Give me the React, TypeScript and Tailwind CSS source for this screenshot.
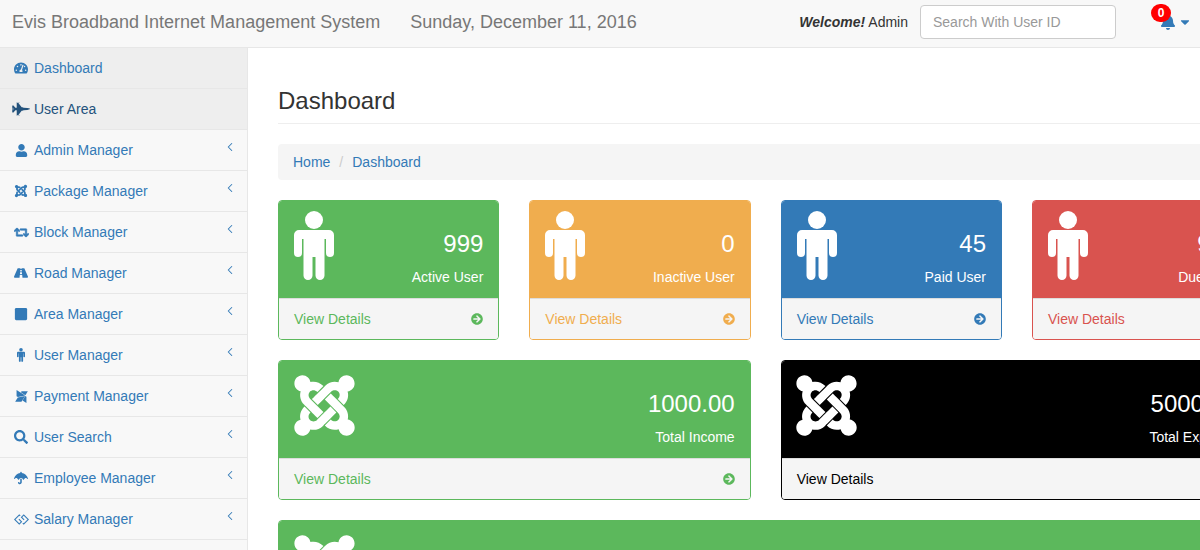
import type { ReactNode } from 'react';
import { ChevronLeft } from 'lucide-react';
import {
  FaArrowCircleRight,
  FaBell,
  FaCaretDown,
  FaFighterJet,
  FaGg,
  FaJoomla,
  FaModx,
  FaRetweet,
  FaRoad,
  FaSearch,
  FaStop,
  FaTachometerAlt,
  FaUmbrella,
  FaUser,
} from 'react-icons/fa';

function PersonIcon({ width = 40, height = 70 }: { width?: number; height?: number }) {
  return (
    <svg width={width} height={height} viewBox="0 0 40 70" fill="currentColor">
      <circle cx="20" cy="9" r="9" />
      <path d="M5 19h30a5 5 0 0 1 5 5v18a4 4 0 0 1-8 0V28h-1.500v36.500a4.500 4.500 0 0 1-9 0V46h-3v18.500a4.500 4.500 0 0 1-9 0V28H8v14a4 4 0 0 1-8 0V24a5 5 0 0 1 5-5z" />
    </svg>
  );
}

const menu = [
  { label: 'Dashboard', icon: <FaTachometerAlt size={14} />, active: true },
  { label: 'User Area', icon: <FaFighterJet size={18} className="shrink-0" />, active: true, dark: true },
  { label: 'Admin Manager', icon: <FaUser size={13} />, sub: true },
  { label: 'Package Manager', icon: <FaJoomla size={14} />, sub: true },
  { label: 'Block Manager', icon: <FaRetweet size={15} stroke="currentColor" strokeWidth={24} />, sub: true },
  { label: 'Road Manager', icon: <FaRoad size={14} />, sub: true },
  { label: 'Area Manager', icon: <FaStop size={14} />, sub: true },
  { label: 'User Manager', icon: <PersonIcon width={8} height={14} />, sub: true },
  { label: 'Payment Manager', icon: <FaModx size={15} />, sub: true },
  { label: 'User Search', icon: <FaSearch size={14} />, sub: true },
  { label: 'Employee Manager', icon: <FaUmbrella size={14} />, sub: true },
  { label: 'Salary Manager', icon: <FaGg size={15} />, sub: true },
];

type PanelProps = {
  icon: ReactNode;
  value: string;
  label: string;
  border: string;
  bg: string;
  link: string;
  wide?: boolean;
};

function Panel({ icon, value, label, border, bg, link, wide }: PanelProps) {
  return (
    <div className={`rounded border bg-white overflow-hidden ${border} ${wide ? 'col-span-2' : ''}`}>
      <div className={`h-[97px] flex justify-between px-[15px] text-white ${bg}`}>
        <div className={wide ? 'pt-[10px] -ml-[4.500px]' : 'pt-[10px]'}>{icon}</div>
        <div className="text-right pt-[27px]">
          <div className="text-2xl leading-[32px]">{value}</div>
          <div className="text-sm leading-5 mt-[7px]">{label}</div>
        </div>
      </div>
      <div className={`h-[41px] border-t border-[#ddd] bg-[#f5f5f5] flex items-center justify-between px-[15px] text-sm ${link}`}>
        <span>View Details</span>
        <FaArrowCircleRight size={12} />
      </div>
    </div>
  );
}

export default function App() {
  return (
    <div className="w-[1200px] h-[550px] overflow-hidden bg-white text-sm text-[#333] font-['Liberation_Sans',Arial,sans-serif]">
      {/* Top bar */}
      <header className="h-12 bg-[#f8f8f8] border-b border-[#e7e7e7] flex items-center pb-1">
        <span className="ml-3 text-lg text-[#777]">Evis Broadband Internet Management System</span>
        <span className="ml-[30px] text-lg text-[#777]">Sunday, December 11, 2016</span>
        <span className="ml-auto">
          <b><i>Welcome!</i></b> Admin
        </span>
        <input
          placeholder="Search With User ID"
          className="ml-3 w-[196px] h-[34px] bg-white border border-[#ccc] rounded px-3 text-sm placeholder:text-[#999] outline-none"
        />
        <div className="relative ml-[44px] mr-2 flex items-center gap-[2px] text-[#337ab7]">
          <FaBell size={16} />
          <FaCaretDown size={14} />
          <span className="absolute -left-[9px] -top-[10px] w-5 h-[18px] rounded-full bg-[#f00] text-white text-xs font-bold flex items-center justify-center">
            0
          </span>
        </div>
      </header>

      <div className="flex">
        {/* Sidebar */}
        <nav className="w-[248px] shrink-0 bg-[#f8f8f8] border-r border-[#e7e7e7] h-[502px]">
          {menu.map((item) => (
            <div
              key={item.label}
              className={`h-[41px] border-b border-[#e7e7e7] flex items-center pl-[13px] pr-[10px] ${
                item.active ? 'bg-[#eee]' : ''
              } ${item.dark ? 'text-[#23527c]' : 'text-[#337ab7]'}`}
            >
              <span className="w-[16px] flex justify-center">{item.icon}</span>
              <span className="ml-[5px] flex-1">{item.label}</span>
              {item.sub && <ChevronLeft size={14} strokeWidth={1.8} className="-translate-y-[3px]" />}
            </div>
          ))}
        </nav>

        {/* Page */}
        <main className="shrink-0 w-[1035.330px] px-[30px]">
          <h1 className="text-2xl leading-[27px] mt-[39px] pb-[9px] border-b border-[#eee] text-[#333]">Dashboard</h1>
          <div className="mt-5 h-9 bg-[#f5f5f5] rounded flex items-center px-[15px] text-[#337ab7]">
            <span>Home</span>
            <span className="px-[9px] text-[#ccc]">/</span>
            <span>Dashboard</span>
          </div>
          <div className="mt-5 grid grid-cols-4 gap-x-[30px] gap-y-5">
            <Panel icon={<PersonIcon />} value="999" label="Active User" border="border-[#5cb85c]" bg="bg-[#5cb85c]" link="text-[#5cb85c]" />
            <Panel icon={<PersonIcon />} value="0" label="Inactive User" border="border-[#f0ad4e]" bg="bg-[#f0ad4e]" link="text-[#f0ad4e]" />
            <Panel icon={<PersonIcon />} value="45" label="Paid User" border="border-[#337ab7]" bg="bg-[#337ab7]" link="text-[#337ab7]" />
            <Panel icon={<PersonIcon />} value="954" label="Due User" border="border-[#d9534f]" bg="bg-[#d9534f]" link="text-[#d9534f]" />
            <Panel wide icon={<FaJoomla size={69} />} value="1000.00" label="Total Income" border="border-[#5cb85c]" bg="bg-[#5cb85c]" link="text-[#5cb85c]" />
            <Panel wide icon={<FaJoomla size={69} />} value="5000.00" label="Total Expense" border="border-black" bg="bg-black" link="text-black" />
            <div className="col-span-4">
              <Panel wide icon={<FaJoomla size={69} />} value="" label="" border="border-[#5cb85c]" bg="bg-[#5cb85c]" link="text-[#5cb85c]" />
            </div>
          </div>
        </main>
      </div>
    </div>
  );
}
